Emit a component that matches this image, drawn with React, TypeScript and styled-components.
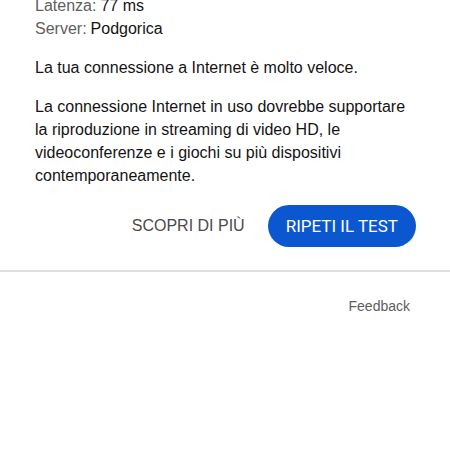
import styled, { createGlobalStyle } from "styled-components";

const GlobalStyle = createGlobalStyle`
  body {
    margin: 0;
    background: #ffffff;
    color: #141414;
    font-family: "Liberation Sans", Arial, sans-serif;
  }
`;

const Card = styled.section`
  padding: 0 34px 23px 35px;
  border-bottom: 2px solid #e0e0e0;
`;

const Stats = styled.dl`
  margin: 0;
  margin-top: -6px;
`;

const Stat = styled.div`
  display: flex;
  gap: 4px;
  font-size: 16px;
  line-height: 23px;
`;

const Label = styled.dt`
  color: #5e5e5e;
`;

const Value = styled.dd`
  margin: 0;
`;

const Text = styled.p`
  margin: 16px 0 0;
  font-size: 16px;
  line-height: 23px;
`;

const Actions = styled.div`
  display: flex;
  justify-content: flex-end;
  align-items: center;
  gap: 23px;
  margin-top: 18px;
`;

const Button = styled.button<{ $primary?: boolean }>`
  height: 42px;
  padding: ${({ $primary }) => ($primary ? "0 18px" : "0")};
  border: none;
  border-radius: 21px;
  background: ${({ $primary }) => ($primary ? "#0b57d0" : "transparent")};
  color: ${({ $primary }) => ($primary ? "#ffffff" : "#4a4a4a")};
  font-family: ${({ $primary }) => ($primary ? "Roboto, sans-serif" : "inherit")};
  font-size: ${({ $primary }) => ($primary ? "17px" : "16px")};
  cursor: pointer;
`;

const Footer = styled.footer`
  display: flex;
  justify-content: flex-end;
  padding: 24px 40px;
`;

const FeedbackLink = styled.a`
  color: #5e5e5e;
  font-size: 14px;
  line-height: 20px;
  text-decoration: none;
`;

const stats = [
  { label: "Latenza:", value: "77 ms" },
  { label: "Server:", value: "Podgorica" },
];

const App = () => {
  return (
    <>
      <GlobalStyle />
      <Card>
        <Stats>
          {stats.map((el) => (
            <Stat key={el.label}>
              <Label>{el.label}</Label>
              <Value>{el.value}</Value>
            </Stat>
          ))}
        </Stats>
        <Text>La tua connessione a Internet è molto veloce.</Text>
        <Text>
          La connessione Internet in uso dovrebbe supportare la riproduzione in
          streaming di video HD, le videoconferenze e i giochi su più
          dispositivi contemporaneamente.
        </Text>
        <Actions>
          <Button type="button">SCOPRI DI PIÙ</Button>
          <Button type="button" $primary>
            RIPETI IL TEST
          </Button>
        </Actions>
      </Card>
      <Footer>
        <FeedbackLink href="#feedback">Feedback</FeedbackLink>
      </Footer>
    </>
  );
};

export default App;
